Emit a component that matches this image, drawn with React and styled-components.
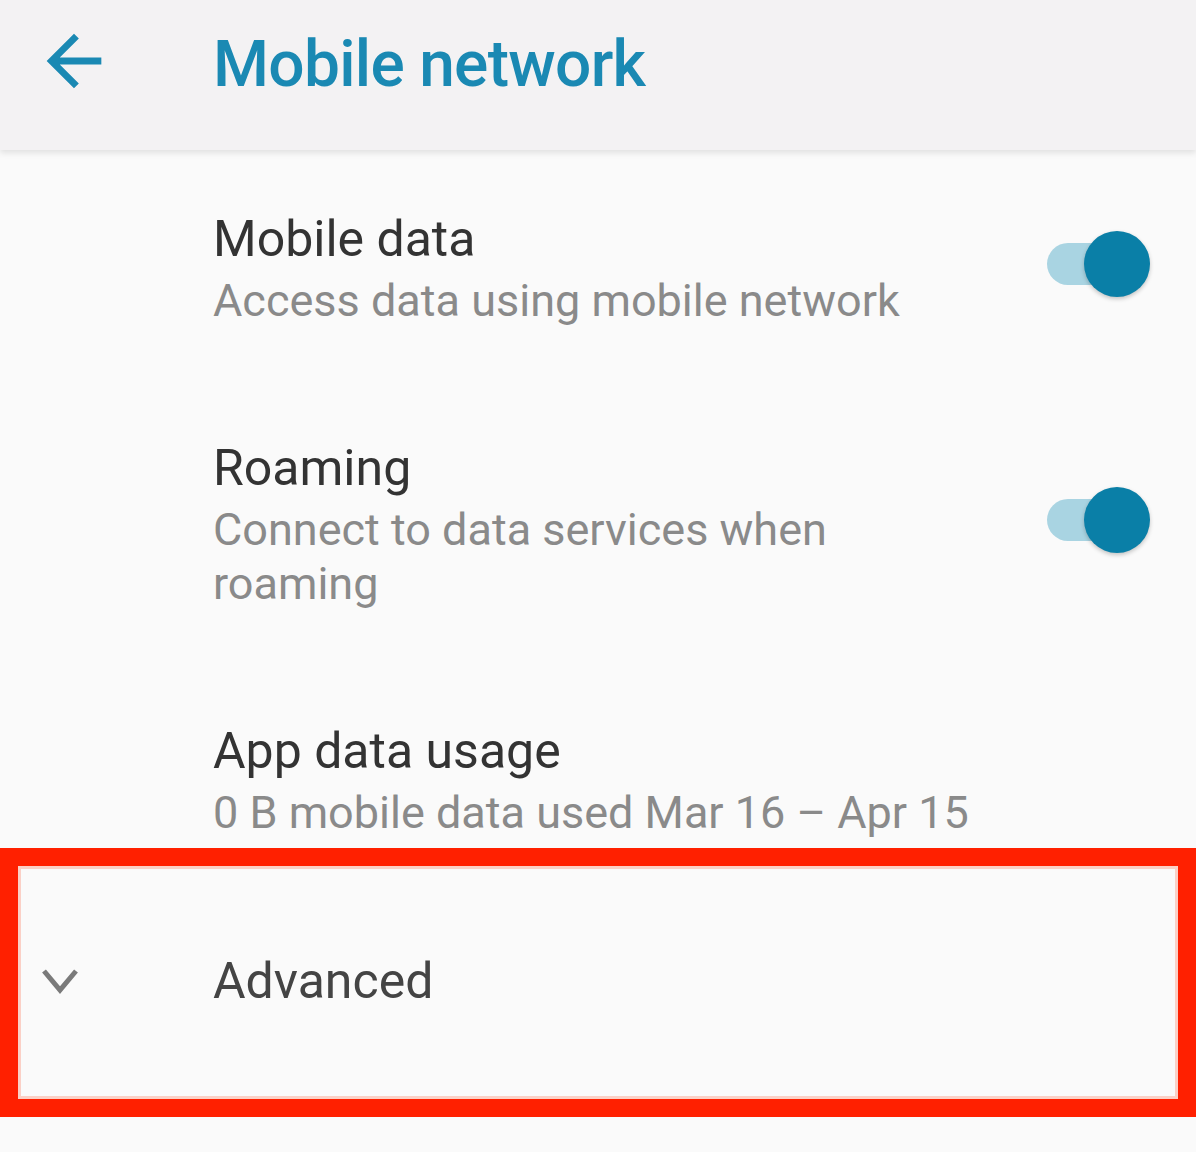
import styled, { createGlobalStyle } from "styled-components";

const teal = "#1a89b3";

const settings = [
  {
    title: "Mobile data",
    summary: "Access data using mobile network",
    toggle: true,
  },
  {
    title: "Roaming",
    summary: "Connect to data services when roaming",
    toggle: true,
  },
  {
    title: "App data usage",
    summary: "0 B mobile data used Mar 16 – Apr 15",
    toggle: false,
  },
];

const App = () => {
  return (
    <>
      <GlobalStyles />
      <Screen>
        <Header>
          <BackButton aria-label="Back">
            <svg width="82" height="82" viewBox="0 0 24 24">
              <path
                d="M20 11H7.83l5.59-5.59L12 4l-8 8 8 8 1.41-1.41L7.83 13H20v-2z"
                fill={teal}
              />
            </svg>
          </BackButton>
          <Title>Mobile network</Title>
        </Header>

        <List>
          {settings.map((item, i) => (
            <Row key={item.title} $last={i === settings.length - 1}>
              <Text $narrow={item.toggle}>
                <ItemTitle>{item.title}</ItemTitle>
                <Summary>{item.summary}</Summary>
              </Text>
              {item.toggle && (
                <Switch>
                  <Track />
                  <Thumb />
                </Switch>
              )}
            </Row>
          ))}

          <AdvancedRow>
            <IconCell>
              <svg width="40" height="32" viewBox="0 0 40 32">
                <polyline
                  points="4,6 20,25 36,6"
                  fill="none"
                  stroke="#7a7a7a"
                  strokeWidth="5"
                />
              </svg>
            </IconCell>
            <AdvancedLabel>Advanced</AdvancedLabel>
          </AdvancedRow>
        </List>
      </Screen>
    </>
  );
};

//Styling Area
const GlobalStyles = createGlobalStyle`
  body {
    margin: 0;
    background: #fafafa;
    font-family: Roboto, "Liberation Sans", sans-serif;
  }
`;

const Screen = styled.div`
  width: 1196px;
  height: 1152px;
  overflow: hidden;
  background: #fafafa;
`;

const Header = styled.header`
  position: relative;
  z-index: 1;
  display: flex;
  align-items: flex-start;
  box-sizing: border-box;
  height: 150px;
  padding: 20px 0 0 33px;
  background: #f3f2f3;
  box-shadow: 0 3px 6px rgba(0, 0, 0, 0.1);
`;

const BackButton = styled.div`
  display: flex;
  width: 82px;
  height: 82px;
`;

const Title = styled.h1`
  margin: 6px 0 0 98px;
  font-size: 64px;
  line-height: 78px;
  font-weight: 500;
  letter-spacing: -0.7px;
  color: ${teal};
`;

const List = styled.div`
  padding-top: 3px;
`;

const Row = styled.div`
  display: flex;
  align-items: center;
  padding: 56px 46px ${(p) => (p.$last ? "8px" : "54px")} 213px;
`;

const Text = styled.div`
  flex: 1;
  max-width: ${(p) => (p.$narrow ? "754px" : "none")};
`;

const ItemTitle = styled.div`
  font-size: 50px;
  line-height: 60px;
  color: #333;
`;

const Summary = styled.div`
  margin-top: 5px;
  font-size: 45px;
  line-height: 54px;
  color: #8a8a8a;
`;

const Switch = styled.div`
  position: relative;
  margin-left: auto;
  margin-bottom: 10px;
  width: 103px;
  height: 66px;
`;

const Track = styled.div`
  position: absolute;
  left: 0;
  top: 12px;
  width: 98px;
  height: 42px;
  border-radius: 21px;
  background: #a9d4e2;
`;

const Thumb = styled.div`
  position: absolute;
  right: 0;
  top: 0;
  width: 66px;
  height: 66px;
  border-radius: 50%;
  background: #0a7fa7;
  box-shadow: 0 2px 4px rgba(0, 0, 0, 0.22);
`;

const AdvancedRow = styled.div`
  display: flex;
  align-items: center;
  box-sizing: border-box;
  height: 269px;
  padding-bottom: 4px;
  border: 18px solid #ff2000;
  box-shadow: inset 0 0 0 3px #fbd0c6;
`;

const IconCell = styled.div`
  display: flex;
  box-sizing: border-box;
  width: 195px;
  padding-left: 22px;
`;

const AdvancedLabel = styled.div`
  font-size: 50px;
  line-height: 60px;
  color: #444;
`;

export default App;
